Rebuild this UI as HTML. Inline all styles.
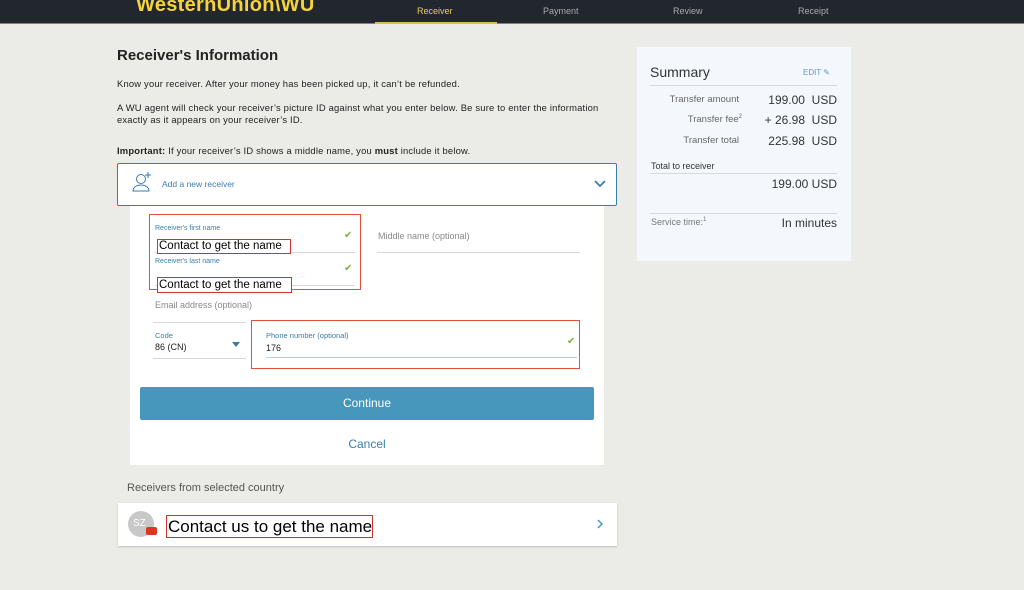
<!DOCTYPE html>
<html><head><style>
*{margin:0;padding:0;box-sizing:border-box}
body{width:1024px;height:590px;background:#ebebe8;font-family:"Liberation Sans",sans-serif;position:relative;overflow:hidden;color:#222}
.a{position:absolute;white-space:nowrap}
.hdr{left:0;top:0;width:1024px;height:24px;background:#22262f;border-bottom:1px solid #8a8456}
.nav{top:6px;font-size:9px;color:#aaa}
.sm{font-size:9.4px;letter-spacing:0.2px;color:#222}
.lbl{font-size:7px;color:#3a7ea8}
.ph{font-size:9px;color:#888}
.ln{height:1px;background:#d8d8d8}
.chk{color:#7cb342;font-size:10px}
.red{border:1.5px solid #e0503a}
.rb{border:1px solid #c33;font-family:"Liberation Sans",sans-serif;font-size:11.5px;color:#000;background:#fff;padding-left:1px;line-height:13px;overflow:hidden}
.sr{font-size:9.5px;color:#666;text-align:right;width:90px}
.sv{font-size:12px;color:#333;text-align:right}
</style></head><body>
<div class="a hdr"></div>
<div class="a" style="left:136px;top:-6px;font-size:20px;font-weight:bold;color:#f5d33a;letter-spacing:0.3px">WesternUnion\WU</div>
<div class="a" style="left:375px;top:22px;width:122px;height:2px;background:#d8c24a"></div>
<div class="a nav" style="left:417px;color:#e8cf5a">Receiver</div>
<div class="a nav" style="left:543px">Payment</div>
<div class="a nav" style="left:673px">Review</div>
<div class="a nav" style="left:798px">Receipt</div>

<div class="a" style="left:117px;top:47px;font-size:15px;font-weight:bold;color:#222">Receiver's Information</div>
<div class="a sm" style="left:117px;top:78px">Know your receiver. After your money has been picked up, it can’t be refunded.</div>
<div class="a sm" style="left:117px;top:102px;line-height:12px">A WU agent will check your receiver’s picture ID against what you enter below. Be sure to enter the information<br>exactly as it appears on your receiver’s ID.</div>
<div class="a sm" style="left:117px;top:145px"><b>Important:</b> If your receiver’s ID shows a middle name, you <b>must</b> include it below.</div>

<div class="a" style="left:117px;top:163px;width:500px;height:43px;background:#fff;border:1px solid #3a7ea8;border-radius:2px"></div>
<svg class="a" style="left:131px;top:170px" width="24" height="24" viewBox="0 0 24 24" fill="none" stroke="#3a7ea8" stroke-width="1"><circle cx="10" cy="9" r="4.5"/><path d="M2 21c0-4 4-6 8-6s8 2 8 6z"/><path d="M17 2v6M14 5h6"/></svg>
<div class="a" style="left:162px;top:179px;font-size:8.5px;color:#3a7ea8">Add a new receiver</div>
<svg class="a" style="left:594px;top:180px" width="12" height="8"><path d="M1 1l5 5 5-5" stroke="#3a7ea8" stroke-width="1.8" fill="none"/></svg>

<div class="a" style="left:130px;top:206px;width:474px;height:259px;background:#fff"></div>
<div class="a red" style="left:149px;top:214px;width:212px;height:76px"></div>
<div class="a lbl" style="left:155px;top:225px">Receiver's first name</div>
<div class="a chk" style="left:344px;top:230px">✔</div>
<div class="a ln" style="left:155px;top:252px;width:200px"></div>
<div class="a rb" style="left:157px;top:239px;width:134px;height:15px">Contact to get the name</div>
<div class="a lbl" style="left:155px;top:258px">Receiver's last name</div>
<div class="a chk" style="left:344px;top:263px">✔</div>
<div class="a ln" style="left:155px;top:285px;width:200px"></div>
<div class="a rb" style="left:157px;top:277px;width:135px;height:16px;line-height:15px">Contact to get the name</div>
<div class="a ph" style="left:378px;top:231px">Middle name (optional)</div>
<div class="a ln" style="left:377px;top:252px;width:203px"></div>
<div class="a ph" style="left:155px;top:300px">Email address (optional)</div>
<div class="a ln" style="left:153px;top:322px;width:93px"></div>
<div class="a lbl" style="left:155px;top:331px;font-size:7.5px">Code</div>
<div class="a" style="left:155px;top:342px;font-size:9px">86 (CN)</div>
<svg class="a" style="left:232px;top:342px" width="8" height="6"><path d="M0 0h8L4 5z" fill="#3a7ea8"/></svg>
<div class="a ln" style="left:153px;top:358px;width:93px"></div>
<div class="a red" style="left:251px;top:320px;width:329px;height:49px"></div>
<div class="a lbl" style="left:266px;top:331px;font-size:7.5px">Phone number (optional)</div>
<div class="a" style="left:266px;top:343px;font-size:9px">176</div>
<div class="a chk" style="left:567px;top:336px">✔</div>
<div class="a" style="left:266px;top:357px;width:311px;height:1px;background:#b8d0de"></div>
<div class="a" style="left:140px;top:387px;width:454px;height:33px;background:#4796bb;border-radius:2px;color:#fff;font-size:12px;text-align:center;line-height:33px">Continue</div>
<div class="a" style="left:140px;top:437px;width:454px;text-align:center;font-size:12px;color:#3a7ea8">Cancel</div>

<div class="a" style="left:127px;top:482px;font-size:11px;color:#555">Receivers from selected country</div>
<div class="a" style="left:118px;top:503px;width:499px;height:43px;background:#fff;box-shadow:0 1px 2px rgba(0,0,0,.2)"></div>
<div class="a" style="left:128px;top:511px;width:26px;height:26px;border-radius:50%;background:#c8c8c8;color:#fff;font-size:10px;line-height:26px;padding-left:5px">SZ</div>
<div class="a" style="left:146px;top:527px;width:11px;height:8px;background:#d9381e;border-radius:2px"></div>
<div class="a rb" style="left:166px;top:515px;width:207px;height:23px;font-size:17px;line-height:21px">Contact us to get the name</div>
<svg class="a" style="left:597px;top:519px" width="6" height="10"><path d="M1 1l4 4-4 4" stroke="#4796bb" stroke-width="1.5" fill="none"/></svg>

<div class="a" style="left:637px;top:47px;width:214px;height:214px;background:#f4f8fc"></div>
<div class="a" style="left:650px;top:64px;font-size:14px;color:#333">Summary</div>
<div class="a" style="left:803px;top:68px;font-size:8px;color:#5a9ac0">EDIT ✎</div>
<div class="a ln" style="left:650px;top:85px;width:187px"></div>
<div class="a sr" style="left:649px;top:94px">Transfer amount</div><div class="a sv" style="left:740px;top:93px;width:97px">199.00&nbsp; USD</div>
<div class="a sr" style="left:652px;top:114px">Transfer fee<sup style="font-size:6px">2</sup></div><div class="a sv" style="left:740px;top:113px;width:97px">+ 26.98&nbsp; USD</div>
<div class="a sr" style="left:649px;top:135px">Transfer total</div><div class="a sv" style="left:740px;top:134px;width:97px">225.98&nbsp; USD</div>
<div class="a" style="left:651px;top:161px;font-size:9px;color:#333">Total to receiver</div>
<div class="a ln" style="left:650px;top:173px;width:187px"></div>
<div class="a sv" style="left:740px;top:177px;width:97px">199.00 USD</div>
<div class="a ln" style="left:650px;top:213px;width:187px"></div>
<div class="a" style="left:651px;top:217px;font-size:9px;color:#777">Service time:<sup style="font-size:6px">1</sup></div>
<div class="a sv" style="left:740px;top:216px;width:97px">In minutes</div>
</body></html>
